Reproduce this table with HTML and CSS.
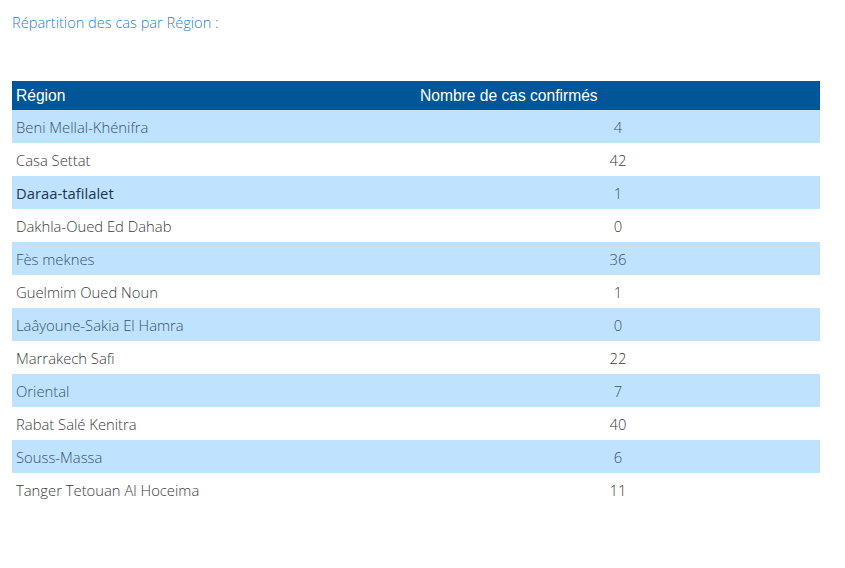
FILE: index.html
```html
<!DOCTYPE html>
<html lang="fr">
<head>
<meta charset="utf-8">
<title>Répartition des cas par Région</title>
<link rel="stylesheet" href="styles.css">
</head>
<body>
<p class="title">Répartition des cas par Région :</p>
<table class="cases">
  <thead>
    <tr><th>Région</th><th>Nombre de cas confirmés</th></tr>
  </thead>
  <tbody>
    <tr class="alt"><td>Beni Mellal-Khénifra</td><td class="num">4</td></tr>
    <tr><td>Casa Settat</td><td class="num">42</td></tr>
    <tr class="alt strong"><td>Daraa-tafilalet</td><td class="num">1</td></tr>
    <tr><td>Dakhla-Oued Ed Dahab</td><td class="num">0</td></tr>
    <tr class="alt"><td>Fès meknes</td><td class="num">36</td></tr>
    <tr><td>Guelmim Oued Noun</td><td class="num">1</td></tr>
    <tr class="alt"><td>Laâyoune-Sakia El Hamra</td><td class="num">0</td></tr>
    <tr><td>Marrakech Safi</td><td class="num">22</td></tr>
    <tr class="alt"><td>Oriental</td><td class="num">7</td></tr>
    <tr><td>Rabat Salé Kenitra</td><td class="num">40</td></tr>
    <tr class="alt"><td>Souss-Massa</td><td class="num">6</td></tr>
    <tr><td>Tanger Tetouan Al Hoceima</td><td class="num">11</td></tr>
  </tbody>
</table>
</body>
</html>
```
FILE: styles.css
```css
html, body {
  margin: 0;
  padding: 0;
  background: #ffffff;
}
body {
  padding: 12px 25px 0 12px;
  font-family: "Open Sans", "Noto Sans", sans-serif;
  font-weight: 300;
}
.title {
  margin: 0;
  height: 69px;
  font-size: 14.6px;
  line-height: 21px;
  color: #1f7fd0;
}
.cases {
  width: 808px;
  border-collapse: collapse;
  table-layout: fixed;
}
.cases th {
  background: #005696;
  color: #ffffff;
  font-family: "Liberation Sans", Arial, sans-serif;
  font-weight: 400;
  font-size: 15.6px;
  text-align: left;
  height: 29px;
  padding: 0 4px;
  vertical-align: middle;
}
.cases td {
  height: 32px;
  padding: 1px 4px 0;
  font-size: 14.8px;
  color: #3a3a3a;
  vertical-align: middle;
}
.cases tr.alt td {
  background: #bfe2fe;
  color: #35536d;
}
.cases tr.strong td:first-child {
  font-weight: 400;
  color: #1c3550;
}
.cases td.num {
  text-align: center;
}
```
